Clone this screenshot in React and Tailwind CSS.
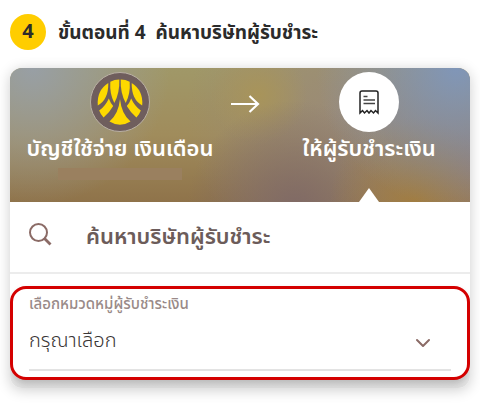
import { useState } from 'react'
import { FiChevronDown } from 'react-icons/fi'

const categories = ['สาธารณูปโภค', 'บัตรเครดิต', 'ประกันภัย']

const BankLogo = () => (
  <svg viewBox="0 0 60 60" className="size-15" aria-hidden="true">
    <circle cx="30" cy="30" r="29.5" fill="#6f5e5d" stroke="#b9b0a4" />
    <g fill="#fdd900">
      <path d="M18.3 11Q6.500 18.500 7.800 33.500Q18.600 27.500 18.300 11Z" />
      <path d="M20.3 9.800Q24.500 7.500 29.300 7.500Q29.800 21 24.300 31Q19.500 22 20.300 9.800Z" />
      <path d="M39.700 9.800Q35.500 7.500 30.700 7.500Q30.200 21 35.700 31Q40.500 22 39.700 9.800Z" />
      <path d="M41.7 11Q53.500 18.500 52.200 33.500Q41.400 27.500 41.700 11Z" />
      <path d="M18.8 26.500Q20.500 31 23.200 34Q19.500 40.500 13.600 45.600Q10.500 42.500 9.200 38.600Q15.500 34 18.800 26.500Z" />
      <path d="M41.2 26.500Q39.500 31 36.800 34Q40.500 40.500 46.400 45.600Q49.500 42.500 50.800 38.600Q44.500 34 41.200 26.500Z" />
      <path d="M30 27Q31.500 42 40.500 49.500Q30 56 19.500 49.500Q28.500 42 30 27Z" />
    </g>
  </svg>
)

const BillIcon = () => (
  <svg viewBox="0 0 22 26" className="h-6.5 w-5.5" fill="none" aria-hidden="true">
    <path
      d="M2 24V4Q2 2 4 2H18Q20 2 20 4V24L17.500 21.500L15.500 24L13 21.500L11 24L9 21.500L6.500 24L4.500 21.500Z"
      stroke="#222"
      strokeWidth="1.5"
    />
    <path d="M5.500 7.500H9.500M5.500 11H17M5.500 14.500H17" stroke="#444" strokeWidth="1.5" />
  </svg>
)

const LongArrow = () => (
  <svg viewBox="0 0 30 18" className="h-4.5 w-7.5" fill="none" stroke="white" strokeWidth="2.2" aria-hidden="true">
    <path d="M1 9H28M19.500 1L28 9L19.500 17" />
  </svg>
)

const SearchIcon = () => (
  <svg viewBox="0 0 24 24" className="size-6 shrink-0" fill="none" stroke="#8b6b66" strokeWidth="2" aria-hidden="true">
    <circle cx="10.500" cy="9.500" r="8.500" />
    <path d="M16 15L22.500 21.500" strokeWidth="2.8" />
  </svg>
)

const TransferHeader = () => (
  <div className="bg-[radial-gradient(circle_at_5%_0%,#989fa5_0%,transparent_30%),radial-gradient(circle_at_97%_0%,#8096b8_0%,transparent_30%),radial-gradient(circle_at_88%_100%,#a17d42_0%,transparent_20%),radial-gradient(circle_at_62%_105%,#806a66_0%,transparent_34%),radial-gradient(circle_at_100%_75%,#917c74_0%,transparent_28%),radial-gradient(circle_at_54%_20%,#a8945a_0%,transparent_18%),radial-gradient(circle_at_72%_35%,#9a8b78_0%,transparent_45%),linear-gradient(180deg,#a09868_0%,#a08c5c_50%,#8f734a_100%)]">
    <div className="grid grid-cols-[22fr_3fr_21fr] pt-1">
      <div className="flex flex-col items-center pb-5.5">
        <BankLogo />
        <p className="text-[22px] leading-9 font-semibold whitespace-nowrap text-white">บัญชีใช้จ่าย เงินเดือน</p>
        <div className="h-3 w-31 bg-[#9a805f]" />
      </div>
      <div className="flex h-15 items-center justify-center pt-1">
        <LongArrow />
      </div>
      <div className="flex flex-col items-center pl-2">
        <div className="flex size-15 items-center justify-center rounded-full bg-white">
          <BillIcon />
        </div>
        <p className="text-[22px] leading-9 font-semibold whitespace-nowrap text-white">ให้ผู้รับชำระเงิน</p>
        <svg viewBox="0 0 20 14" className="mt-auto h-3.5 w-5" aria-hidden="true">
          <path d="M0 14L10 0L20 14Z" fill="white" />
        </svg>
      </div>
    </div>
  </div>
)

const App = () => {
  const [query, setQuery] = useState('')
  const [category, setCategory] = useState('')

  return (
    <main className="px-2.5 pt-3.5 pb-4 font-['Noto_Sans_Thai','Liberation_Sans',sans-serif]">
      <div className="flex items-center gap-3">
        <span className="flex size-9 items-center justify-center rounded-full bg-[#ffcd00] text-xl font-bold text-[#2b2b2b]">
          4
        </span>
        <h1 className="pt-1 text-[19px] leading-7 font-bold whitespace-pre text-[#2b2b2b]">ขั้นตอนที่ 4  ค้นหาบริษัทผู้รับชำระ</h1>
      </div>

      <section className="mt-4.5 overflow-hidden rounded-xl bg-white shadow-[0_2px_14px_rgba(0,0,0,0.2)]">
        <TransferHeader />

        <div className="flex h-18 items-center border-b-2 border-[#ececec] pb-1 pl-4.5">
          <SearchIcon />
          <input
            type="text"
            aria-label="ค้นหาบริษัทผู้รับชำระ"
            placeholder="ค้นหาบริษัทผู้รับชำระ"
            value={query}
            onChange={(e) => setQuery(e.target.value)}
            className="ml-8 h-12 min-w-0 flex-1 pt-1 pl-0.5 text-[22px] font-semibold text-[#6c5c5a] outline-none placeholder:text-[#6c5c5a]"
          />
        </div>

        <div className="bg-linear-to-b from-white from-80% to-[#dedede] pt-3 pb-2">
          <div className="rounded-2xl border-3 border-[#d40000] bg-white px-4 pt-1 pb-1.5 shadow-[0_4px_6px_rgba(0,0,0,0.2)]">
            <label htmlFor="category" className="block text-[15px] leading-6 font-medium text-[#998a88]">
              เลือกหมวดหมู่ผู้รับชำระเงิน
            </label>
            <div className="relative border-b-2 border-[#e3e3e3] pb-1">
              <select
                id="category"
                value={category}
                onChange={(e) => setCategory(e.target.value)}
                className="h-12 w-full appearance-none bg-transparent text-xl font-light text-[#3a3636] outline-none"
              >
                <option value="">กรุณาเลือก</option>
                {categories.map((name) => (
                  <option key={name} value={name}>{name}</option>
                ))}
              </select>
              <FiChevronDown size={24} className="pointer-events-none absolute top-3.5 right-4 text-[#8b6b66]" />
            </div>
          </div>
        </div>
      </section>
    </main>
  )
}

export default App
